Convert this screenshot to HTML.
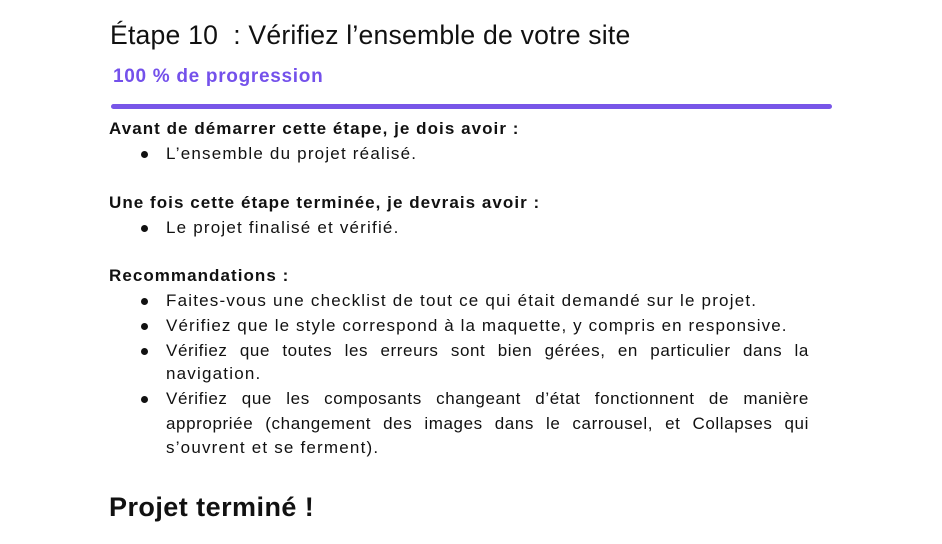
<!DOCTYPE html>
<html><head><meta charset="utf-8"><style>
body{margin:0;width:942px;height:544px;background:#fff;position:relative;overflow:hidden;font-family:"Liberation Sans",sans-serif;color:#111}
.l{position:absolute;white-space:nowrap;font-size:17px;line-height:20px;letter-spacing:1.2px}
.b{font-weight:bold;letter-spacing:1.05px}
.d{position:absolute;left:141px;width:7px;height:7px;border-radius:50%;background:#111}
.j{width:643px;text-align:justify;text-align-last:justify;letter-spacing:0.6px}
</style></head><body>
<div class="l" style="left:110px;top:19px;font-size:26.6px;line-height:32px;letter-spacing:0.2px">Étape 10&nbsp; : Vérifiez l’ensemble de votre site</div>
<div class="l b" style="left:113px;top:66px;font-size:19px;line-height:22px;color:#7451eb;letter-spacing:0.7px">100 % de progression</div>
<div style="position:absolute;left:111px;top:104px;width:721px;height:5px;border-radius:3px;background:#7856e8"></div>

<div class="l b" style="left:109px;top:119px">Avant de démarrer cette étape, je dois avoir :</div>
<div class="d" style="top:151px"></div><div class="l" style="left:166px;top:144px">L’ensemble du projet réalisé.</div>

<div class="l b" style="left:109px;top:193px">Une fois cette étape terminée, je devrais avoir :</div>
<div class="d" style="top:225px"></div><div class="l" style="left:166px;top:218px">Le projet finalisé et vérifié.</div>

<div class="l b" style="left:109px;top:266px">Recommandations :</div>
<div class="d" style="top:298px"></div><div class="l" style="left:166px;top:291px">Faites-vous une checklist de tout ce qui était demandé sur le projet.</div>
<div class="d" style="top:323px"></div><div class="l" style="left:166px;top:316px;letter-spacing:1.1px">Vérifiez que le style correspond à la maquette, y compris en responsive.</div>
<div class="d" style="top:348px"></div><div class="l j" style="left:166px;top:341px">Vérifiez que toutes les erreurs sont bien gérées, en particulier dans la</div>
<div class="l" style="left:166px;top:364px">navigation.</div>
<div class="d" style="top:396px"></div><div class="l j" style="left:166px;top:389px">Vérifiez que les composants changeant d’état fonctionnent de manière</div>
<div class="l j" style="left:166px;top:414px">appropriée (changement des images dans le carrousel, et Collapses qui</div>
<div class="l" style="left:166px;top:438px">s’ouvrent et se ferment).</div>

<div class="l b" style="left:109px;top:491px;font-size:27px;line-height:32px;letter-spacing:0.45px">Projet terminé !</div>
</body></html>
